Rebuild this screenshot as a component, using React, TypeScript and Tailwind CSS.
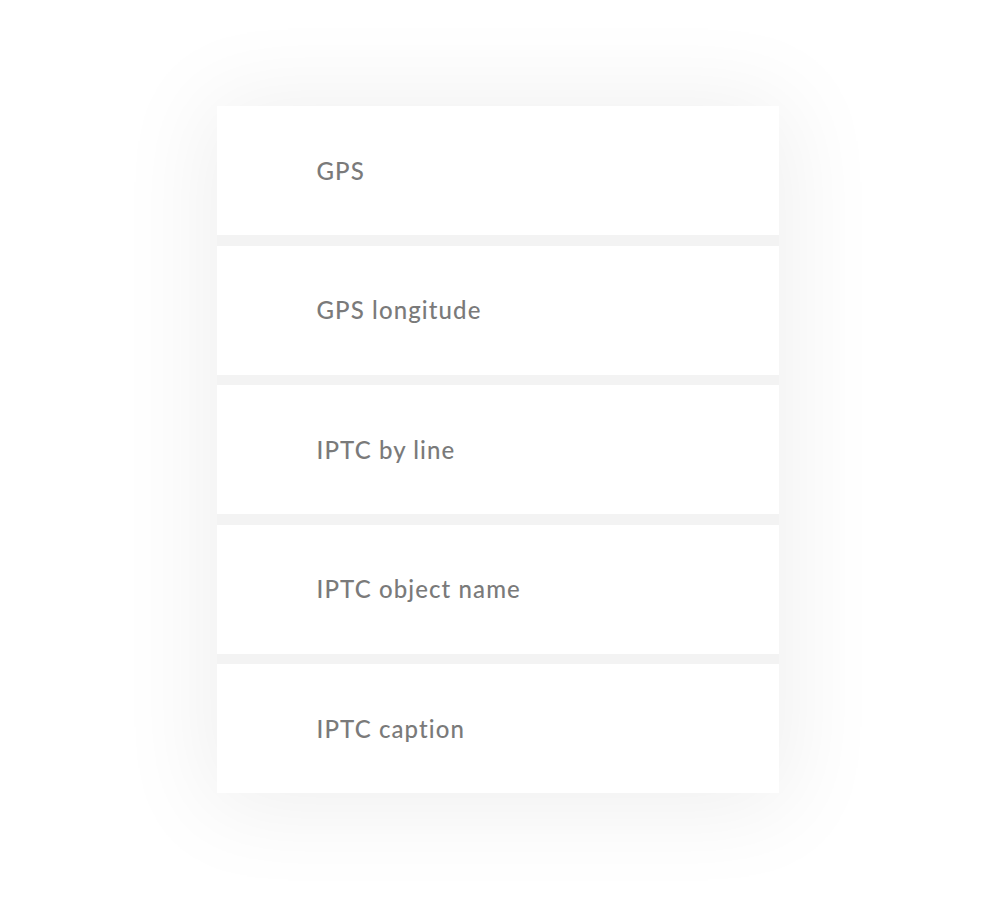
const items = ["GPS", "GPS longitude", "IPTC by line", "IPTC object name", "IPTC caption"];

export default function App() {
  return (
    <div className="min-h-screen w-full bg-white flex justify-center pt-[106px]">
      <div className="w-[562px] h-[687px] flex flex-col justify-between bg-[#f3f3f3] shadow-[0_5px_90px_10px_rgba(0,0,0,0.065)]">
        {items.map((label) => (
          <div key={label} className="h-[129px] bg-white flex items-center pl-[100px]">
            <span className="text-[24px] font-medium text-[#7a7a7a] font-['Lato',sans-serif] tracking-[1.1px]">
              {label}
            </span>
          </div>
        ))}
      </div>
    </div>
  );
}
